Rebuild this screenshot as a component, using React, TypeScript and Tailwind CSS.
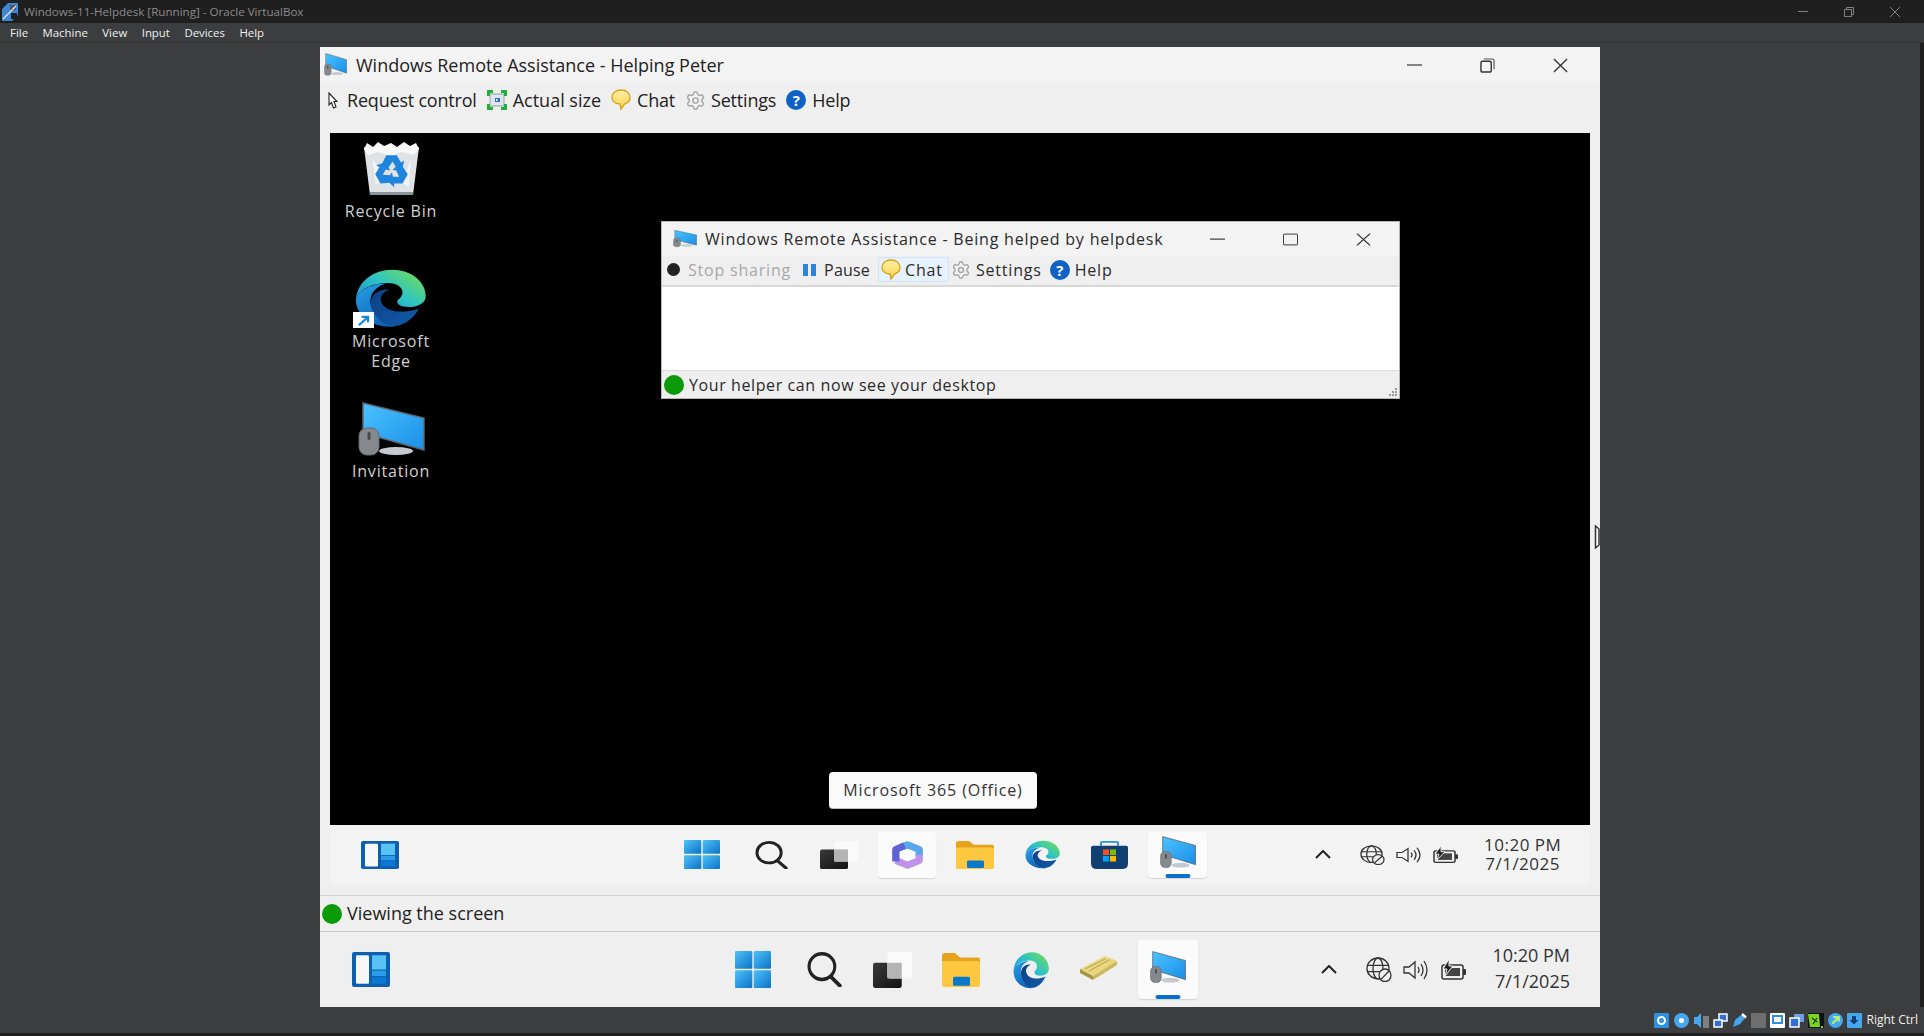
import { Settings } from "lucide-react";

const uiFont = "font-['Open_Sans',sans-serif]";

// gradients shared by all the icons below
function Defs() {
  return (
    <svg className="absolute w-0 h-0" aria-hidden="true">
      <defs>
        <linearGradient id="screen" x1="0" y1="0" x2="1" y2="1">
          <stop offset="0" stopColor="#4cc2ff" />
          <stop offset="1" stopColor="#1a8fe8" />
        </linearGradient>
        <linearGradient id="start" x1="0" y1="0" x2="1" y2="1">
          <stop offset="0" stopColor="#4fc3f7" />
          <stop offset="1" stopColor="#0a72c9" />
        </linearGradient>
        <linearGradient id="edgeTop" x1="0" y1="1" x2="1" y2="0.2">
          <stop offset="0" stopColor="#1a86d8" />
          <stop offset="0.55" stopColor="#2ec4c4" />
          <stop offset="1" stopColor="#6fdc5a" />
        </linearGradient>
        <linearGradient id="edgeLeft" x1="0" y1="0" x2="0.6" y2="1">
          <stop offset="0" stopColor="#2a9fe6" />
          <stop offset="1" stopColor="#0c64b8" />
        </linearGradient>
        <linearGradient id="edgeDark" x1="0" y1="0" x2="1" y2="1">
          <stop offset="0" stopColor="#0d3f86" />
          <stop offset="1" stopColor="#115ba8" />
        </linearGradient>
        <linearGradient id="chat" x1="0" y1="0" x2="0" y2="1">
          <stop offset="0" stopColor="#fff0a8" />
          <stop offset="1" stopColor="#ffd24d" />
        </linearGradient>
        <linearGradient id="taskBack" x1="0" y1="0" x2="1" y2="1">
          <stop offset="0" stopColor="#3a3a3a" />
          <stop offset="1" stopColor="#111" />
        </linearGradient>
      </defs>
    </svg>
  );
}

function MonitorIcon({ className = "" }: { className?: string }) {
  return (
    <svg viewBox="0 0 67 57" preserveAspectRatio="none" className={className}>
      <path d="M5 1 L66 16 V48 L5 31Z" fill="url(#screen)" stroke="#5d6670" strokeWidth="1.4" />
      <ellipse cx="38" cy="49" rx="17" ry="4" fill="#c4cad0" />
      <rect x="1" y="26" width="20" height="27" rx="8" fill="#85888c" stroke="#66696d" />
      <rect x="9.5" y="30" width="3" height="8" rx="1.5" fill="#44474a" />
    </svg>
  );
}

function RecycleBin({ className = "" }: { className?: string }) {
  const arrow = "M-5 -15 L5 -15 L9 -8 L12 -10 L10 0 L1 -1 L4 -4 L1 -9 L-3 -3 L-9 -7Z";
  return (
    <svg viewBox="0 0 55 53" className={className}>
      <path d="M0 5 L55 5 L49 53 H6Z" fill="#dfe3e6" />
      <path d="M0 7 L3 1 L9 5 L14 0 L20 4 L27 1 L33 5 L40 0 L46 4 L52 1 L55 7 L50 13 L38 10 L27 14 L14 10 L4 13Z" fill="#f7f8f9" />
      <path d="M6 50 H49 L49 53 H6Z" fill="#8d9399" />
      <path d="M8 16 L20 34 L12 44Z M47 18 L37 40 L45 45Z" fill="#f1f3f5" />
      <g fill="#1f84dc" transform="translate(27.5 29) scale(1.05)">
        <path d={arrow} />
        <path d={arrow} transform="rotate(120)" />
        <path d={arrow} transform="rotate(240)" />
      </g>
    </svg>
  );
}

function EdgeIcon({ className = "", shortcut = false }: { className?: string; shortcut?: boolean }) {
  return (
    <div className={`relative ${className}`}>
      <svg viewBox="0 0 100 100" preserveAspectRatio="none" className="w-full h-full">
        <path d="M4 52 C6 22 28 3 52 3 C78 3 97 23 97 47 C97 59 86 65 74 65 C65 65 59 62 59 56 C59 52 66 50 66 41 C66 30 56 25 46 25 C26 25 8 36 4 52Z" fill="url(#edgeTop)" />
        <path d="M4 52 C8 36 26 26 44 26 C30 31 20 45 24 63 C28 81 42 95 58 97 C28 102 3 80 4 52Z" fill="url(#edgeLeft)" />
        <path d="M24 63 C21 46 34 34 49 36 C38 41 34 51 39 60 C46 74 68 76 88 68 C80 86 66 97 54 97 C38 95 27 80 24 63Z" fill="url(#edgeDark)" />
      </svg>
      {shortcut && (
        <div className="absolute left-0 bottom-0 w-[21px] h-[16px] bg-white flex items-center justify-center">
          <svg viewBox="0 0 16 12" className="w-[15px] h-[11px]">
            <path d="M3 11 L12 3 M6 2 H13 V8" fill="none" stroke="#1685dc" strokeWidth="2.4" />
          </svg>
        </div>
      )}
    </div>
  );
}

function WidgetsIcon({ className = "" }: { className?: string }) {
  return (
    <svg viewBox="0 0 38 32" preserveAspectRatio="none" className={className}>
      <rect width="38" height="32" rx="2" fill="#0f5fb0" />
      <rect x="4" y="3" width="13" height="26" rx="1" fill="#f7f7f7" />
      <rect x="20" y="3" width="14" height="13" fill="#57c3f5" />
      <rect x="20" y="17" width="14" height="5" fill="#2b9de8" />
      <rect x="20" y="23" width="14" height="6" fill="#0b78d4" />
    </svg>
  );
}

function StartIcon({ className = "" }: { className?: string }) {
  return (
    <svg viewBox="0 0 36 30" preserveAspectRatio="none" className={className}>
      <rect width="17.3" height="14.3" rx="1" fill="url(#start)" />
      <rect x="18.7" width="17.3" height="14.3" rx="1" fill="url(#start)" />
      <rect y="15.7" width="17.3" height="14.3" rx="1" fill="url(#start)" />
      <rect x="18.7" y="15.7" width="17.3" height="14.3" rx="1" fill="url(#start)" />
    </svg>
  );
}

function SearchIcon({ className = "" }: { className?: string }) {
  return (
    <svg viewBox="0 0 34 30" preserveAspectRatio="none" className={className}>
      <ellipse cx="14.5" cy="12.5" rx="12.5" ry="11" fill="none" stroke="#222" strokeWidth="3" />
      <path d="M23 21 L32 29" stroke="#222" strokeWidth="3.4" strokeLinecap="round" />
    </svg>
  );
}

function TaskViewIcon({ className = "" }: { className?: string }) {
  return (
    <svg viewBox="0 0 38 30" preserveAspectRatio="none" className={className}>
      <rect x="0" y="9" width="28" height="21" rx="2" fill="url(#taskBack)" />
      <rect x="14" y="0" width="24" height="22" rx="2" fill="#fafafa" />
      <rect x="14" y="9" width="14" height="13" fill="#b4b4b4" />
    </svg>
  );
}

function FolderIcon({ className = "" }: { className?: string }) {
  return (
    <svg viewBox="0 0 38 30" preserveAspectRatio="none" className={className}>
      <path d="M0 3 Q0 0 3 0 H13 L18 4 H36 Q38 4 38 6 V10 H0Z" fill="#e6a21c" />
      <path d="M0 7 H35 Q38 7 38 10 V28 Q38 30 36 30 H2 Q0 30 0 28Z" fill="#fdc83f" />
      <rect x="11" y="21" width="17" height="8" rx="1.5" fill="#0b78c9" />
    </svg>
  );
}

function StoreIcon({ className = "" }: { className?: string }) {
  return (
    <svg viewBox="0 0 37 30" preserveAspectRatio="none" className={className}>
      <path d="M10 5 V2 Q10 1 12 1 H25 Q27 1 27 2 V5" fill="none" stroke="#2c93dd" strokeWidth="2" />
      <path d="M0 7 Q0 5 2 5 H35 Q37 5 37 7 V24 Q37 30 31 30 H6 Q0 30 0 24Z" fill="#123f73" />
      <rect x="12" y="9" width="6" height="6" fill="#f25022" />
      <rect x="19" y="9" width="6" height="6" fill="#7fba00" />
      <rect x="12" y="16" width="6" height="6" fill="#00a4ef" />
      <rect x="19" y="16" width="6" height="6" fill="#ffb900" />
    </svg>
  );
}

function M365Icon({ className = "" }: { className?: string }) {
  return (
    <svg viewBox="0 0 36 30" preserveAspectRatio="none" className={className} fill="none" strokeWidth="7.5" strokeLinejoin="round">
      <path d="M30 16 V9 L18 4 L12 6.500" stroke="#5aa6ea" />
      <path d="M30 15 V21 L18 26 L6 21" stroke="#c192ea" />
      <path d="M6 22 V9 L15 5" stroke="#5e62d2" />
    </svg>
  );
}

function BookIcon({ className = "" }: { className?: string }) {
  return (
    <svg viewBox="0 0 39 25" preserveAspectRatio="none" className={className}>
      <path d="M1 14 L26 1 L38 6 L14 21Z" fill="#e8d77e" />
      <path d="M1 14 L14 21 V25 L1 18Z" fill="#a89445" />
      <path d="M14 21 L38 6 V10 L14 25Z" fill="#cdb75a" />
      <path d="M6 14 L26 4 M10 16 L30 5" stroke="#b59f4a" strokeWidth="1" />
    </svg>
  );
}

function GlobeIcon({ className = "" }: { className?: string }) {
  return (
    <svg viewBox="0 0 26 24" preserveAspectRatio="none" className={className} fill="none" stroke="#333" strokeWidth="1.3">
      <ellipse cx="12" cy="11" rx="11" ry="10" />
      <ellipse cx="12" cy="11" rx="5" ry="10" />
      <path d="M1 8 H23 M1 14 H23" />
      <circle cx="19" cy="17.5" r="6" fill="#f0f0f0" />
      <path d="M15 21.5 L23 13.5" />
    </svg>
  );
}

function SpeakerIcon({ className = "" }: { className?: string }) {
  return (
    <svg viewBox="0 0 26 20" preserveAspectRatio="none" className={className} fill="none" stroke="#333" strokeWidth="1.3">
      <path d="M1 7 H6 L12 2 V18 L6 13 H1Z" />
      <path d="M15 7 Q17 10 15 13 M18 4 Q22 10 18 16 M21 1 Q27 10 21 19" />
    </svg>
  );
}

function BatteryIcon({ className = "" }: { className?: string }) {
  return (
    <svg viewBox="0 0 26 22" preserveAspectRatio="none" className={className}>
      <rect x="1" y="6" width="21" height="14" rx="2" fill="#f0f0f0" stroke="#333" strokeWidth="1.5" />
      <rect x="4" y="9" width="15" height="8" fill="#444" />
      <rect x="22" y="10" width="3" height="6" rx="1" fill="#333" />
      <path d="M8 0 L2 10 H6 L4 17 L12 7 H8Z" fill="#222" stroke="#f0f0f0" strokeWidth="1" />
    </svg>
  );
}

function Chevron() {
  return (
    <svg viewBox="0 0 16 9" className="w-[16px] h-[9px]">
      <path d="M1 8 L8 1 L15 8" fill="none" stroke="#222" strokeWidth="2" />
    </svg>
  );
}

function ChatIcon() {
  return (
    <svg viewBox="0 0 20 22" className="w-[20px] h-[22px] shrink-0">
      <path d="M10 1 C15 1 19 4 19 8.500 C19 12 16.500 14 13.500 15 L10 20 L9 15 C4.500 14.500 1 12.500 1 8.500 C1 4 5 1 10 1Z" fill="url(#chat)" stroke="#d9a520" strokeWidth="1.400" />
    </svg>
  );
}

function HelpIcon() {
  return (
    <div className="w-[20px] h-[20px] shrink-0 rounded-full bg-[#0f62c4] text-white text-[15px] leading-[20px] font-bold text-center tracking-normal">?</div>
  );
}

function ActualSizeIcon() {
  return (
    <svg viewBox="0 0 20 20" className="w-[20px] h-[20px] shrink-0">
      <rect x="3" y="4" width="14" height="12" fill="#dfe5ea" stroke="#93a3ad" />
      <path d="M1.500 6 V1.500 H6 M14 1.500 H18.500 V6 M18.500 14 V18.500 H14 M6 18.500 H1.500 V14" fill="none" stroke="#22b03a" strokeWidth="3" />
      <rect x="8" y="8" width="5" height="4" fill="#2a6fc4" />
      <rect x="9" y="9" width="1.500" height="2" fill="#fff" />
    </svg>
  );
}

function Gear({ className = "" }: { className?: string }) {
  return <Settings className={`fill-[#f2f2f2] text-[#a6a6a6] shrink-0 ${className}`} strokeWidth={1.7} />;
}

function DesktopItem({ icon, label, className = "" }: { icon: React.ReactNode; label: React.ReactNode; className?: string }) {
  return (
    <div className={`flex flex-col items-center text-[#d0d0d0] text-[16px] leading-[20px] tracking-[0.8px] text-center ${className}`}>
      {icon}
      {label}
    </div>
  );
}

function WindowControls({ max, className = "" }: { max: React.ReactNode; className?: string }) {
  return (
    <div className={`flex items-center ${className}`}>
      <svg viewBox="0 0 15 15" className="w-[15px] h-[15px]">
        <path d="M0 7 H15" stroke="#444" strokeWidth="1.300" />
      </svg>
      <div className="ml-[58px]">{max}</div>
      <svg viewBox="0 0 16 16" className="ml-[58px] w-[15px] h-[15px]">
        <path d="M1 1 L15 15 M15 1 L1 15" stroke="#333" strokeWidth="1.400" />
      </svg>
    </div>
  );
}

function RunningBox({ className = "" }: { className?: string }) {
  return (
    <div className={`relative flex items-center justify-center bg-[#fbfbfb] rounded-[4px] shadow-[0_1px_1px_rgba(0,0,0,0.12)] ${className}`}>
      <MonitorIcon className="w-[36px] h-[34px] mb-[4px]" />
      <div className="absolute bottom-[0px] left-1/2 -translate-x-1/2 w-[25px] h-[4px] rounded-full bg-[#0b6fc9]" />
    </div>
  );
}

function InnerWindow() {
  return (
    <div className="absolute left-[331px] top-[88px] w-[739px] h-[178px] flex flex-col bg-white border border-[#b5b5b5] text-[16px] tracking-[0.8px] text-[#2a2a2a]">
      <div className="h-[34px] shrink-0 bg-[#f3f3f3] flex items-center pl-[11px]">
        <MonitorIcon className="w-[24px] h-[18px]" />
        <span className="ml-[8px] w-[505px] whitespace-nowrap">Windows Remote Assistance - Being helped by helpdesk</span>
        <WindowControls
          className="scale-y-90"
          max={<div className="w-[15px] h-[13px] border-[1.5px] border-[#333] rounded-[1px]" />}
        />
      </div>
      <div className="h-[31px] shrink-0 bg-[#efefef] border-b-[2px] border-[#d8d8d8] flex items-center pl-[5px] pb-[2px]">
        <div className="w-[13px] h-[13px] rounded-full bg-[#222]" />
        <span className="ml-[8px] text-[#a8a8a8]">Stop sharing</span>
        <div className="ml-[12px] flex gap-[3px]">
          <div className="w-[5px] h-[12px] bg-[#2a86dc]" />
          <div className="w-[5px] h-[12px] bg-[#2a86dc]" />
        </div>
        <span className="ml-[8px] tracking-[0.2px]">Pause</span>
        <div className="ml-[8px] h-[25px] w-[71px] flex items-center gap-[4px] pl-[2px] bg-[#e5f1fb] border border-[#cfe4f7] rounded-[2px]">
          <ChatIcon />
          <span>Chat</span>
        </div>
        <Gear className="ml-[2px] w-[20px] h-[20px]" />
        <span className="ml-[5px]">Settings</span>
        <div className="ml-[8px]"><HelpIcon /></div>
        <span className="ml-[5px]">Help</span>
      </div>
      <div className="flex-1" />
      <div className="relative h-[28px] shrink-0 bg-[#efefef] border-t border-[#dcdcdc] flex items-center pl-[2px] tracking-[0.6px]">
        <div className="w-[20px] h-[20px] rounded-full bg-[#0a9a0a]" />
        <span className="ml-[5px]">Your helper can now see your desktop</span>
        {/* resize grip */}
        <div className="absolute right-[2px] bottom-[2px] grid grid-cols-3 gap-[1px]">
          {[0, 0, 1, 0, 1, 1, 1, 1, 1].map((on, i) => (
            <div key={i} className={`w-[2px] h-[2px] ${on ? "bg-[#9a9a9a]" : ""}`} />
          ))}
        </div>
      </div>
    </div>
  );
}

function StatusIcons() {
  return (
    <div className="flex items-center gap-[4px]">
      <div className="w-[15px] h-[15px] bg-[#2f8fe0] rounded-[1px] flex items-center justify-center">
        <div className="w-[9px] h-[9px] rounded-full border-2 border-white" />
      </div>
      <div className="ml-[1px] w-[15px] h-[15px] rounded-full bg-[#45a8ee] flex items-center justify-center">
        <div className="w-[5px] h-[5px] rounded-full bg-white" />
      </div>
      <svg viewBox="0 0 15 15" className="ml-[1px] w-[15px] h-[15px]">
        <path d="M0 4 H3 L7 0 V15 L3 11 H0Z" fill="#45a8ee" />
        <rect x="9" y="3" width="6" height="12" fill="#7f7f7f" />
      </svg>
      <svg viewBox="0 0 15 15" className="w-[15px] h-[15px]">
        <rect x="6" y="1" width="8" height="7" fill="#2f6fd0" stroke="#fff" strokeWidth="1.500" />
        <rect x="1" y="7" width="8" height="7" fill="#2f6fd0" stroke="#fff" strokeWidth="1.500" />
      </svg>
      <svg viewBox="0 0 15 15" className="w-[15px] h-[15px]">
        <path d="M1 14 L3 7 L9 2 L13 5 L8 11Z" fill="#45a8ee" />
        <path d="M10 1 L14 4.500" stroke="#fff" strokeWidth="2.500" />
      </svg>
      <div className="w-[15px] h-[15px] bg-[#6e6e6e]" />
      <div className="w-[15px] h-[15px] bg-white p-[2px] rounded-[1px]">
        <div className="w-full h-[9px] bg-[#2f8fe0] p-[2px]"><div className="w-full h-full bg-white" /></div>
      </div>
      <svg viewBox="0 0 15 15" className="w-[15px] h-[15px]">
        <rect x="5" y="1" width="10" height="8" fill="#6f9fe6" />
        <rect x="1" y="5" width="9" height="9" fill="#2f6fd0" stroke="#fff" strokeWidth="1.500" />
      </svg>
      <svg viewBox="0 0 16 15" className="w-[16px] h-[15px]">
        <rect width="16" height="15" fill="#111" />
        <path d="M0 1 L11 1 L12 14 L2 14Z" fill="#7ed321" />
        <path d="M4 5 L9 9 M9 5 L5 11" stroke="#1a3a00" strokeWidth="1.200" />
        <rect x="13" y="13" width="2" height="2" fill="#7ed321" />
      </svg>
      <div className="w-[15px] h-[15px] rounded-full bg-[#45a8ee] flex items-center justify-center">
        <svg viewBox="0 0 10 10" className="w-[11px] h-[11px]">
          <path d="M2 8 L8 2 M3 2 H8 V6" fill="none" stroke="#b6ee7a" strokeWidth="2" />
        </svg>
      </div>
      <div className="w-[15px] h-[15px] bg-[#45a8ee] rounded-[1px] flex items-center justify-center">
        <svg viewBox="0 0 10 10" className="w-[10px] h-[10px]">
          <path d="M3 1 H7 V5 H9.500 L5 9.500 L0.500 5 H3Z" fill="#123f73" />
        </svg>
      </div>
    </div>
  );
}

export default function App() {
  return (
    <div className={`w-screen h-screen overflow-hidden flex flex-col bg-[#3c3d3f] ${uiFont}`}>
      <Defs />
      {/* host window title */}
      <div className="h-[23px] shrink-0 bg-[#1f1f1f] flex items-center text-[11.600px] text-[#8b8b8b]">
        <svg viewBox="0 0 16 18" className="ml-[2px] w-[16px] h-[18px]">
          <path d="M0 6 L6 0 H16 V12 L10 18 H0Z" fill="#3f86d4" />
          <rect x="8" y="2" width="6" height="5" fill="#555" />
          <rect x="9" y="10" width="6" height="6" fill="#1f1f1f" />
          <path d="M1 16 L14 3" stroke="#dfe8f0" strokeWidth="1.200" />
        </svg>
        <span className="ml-[6px]">Windows-11-Helpdesk [Running] - Oracle VirtualBox</span>
        <div className="ml-auto mr-[24px] flex items-center gap-[36px]">
          <div className="w-[10px] h-[1px] bg-[#808080]" />
          <svg viewBox="0 0 10 10" className="w-[10px] h-[10px]">
            <path d="M0.500 2.500 H7.500 V9.500 H0.500Z M2.500 2.500 V0.500 H9.500 V7.500 H7.500" fill="none" stroke="#808080" />
          </svg>
          <svg viewBox="0 0 10 10" className="w-[10px] h-[10px]">
            <path d="M0 0 L10 10 M10 0 L0 10" stroke="#808080" />
          </svg>
        </div>
      </div>

      {/* host menu */}
      <div className="h-[20px] shrink-0 border-b border-[#333436] flex items-center gap-[14.500px] pl-[10px] text-[11.400px] text-[#f0f0f0]">
        <span>File</span>
        <span>Machine</span>
        <span>View</span>
        <span>Input</span>
        <span>Devices</span>
        <span>Help</span>
      </div>

      {/* guest area */}
      <div className="relative flex-1 min-h-0 border-r-[4px] border-[#1f1f1f] pt-[4px] pl-[320px]">
        <div className="w-[1280px] h-[960px] flex flex-col bg-[#efefef] text-[#222]">
          <div className="h-[36px] shrink-0 bg-[#f3f3f3] flex items-center pl-[4px] text-[18px]">
            <MonitorIcon className="w-[23px] h-[24px]" />
            <span className="ml-[9px] w-[1023px] whitespace-nowrap">Windows Remote Assistance - Helping Peter</span>
            <div className="ml-[28px]">
              <WindowControls
                max={
                  <svg viewBox="0 0 16 16" className="w-[15px] h-[15px]">
                    <rect x="1" y="3.500" width="11" height="11.500" rx="2" fill="none" stroke="#333" strokeWidth="1.500" />
                    <path d="M4 1 H13 Q15 1 15 3 V12" fill="none" stroke="#555" strokeWidth="1.200" />
                  </svg>
                }
              />
            </div>
          </div>

          <div className="h-[50px] shrink-0 flex items-start pt-[5px] pl-[8px] text-[18px] tracking-[-0.2px]">
            <div className="flex items-center h-[24px]">
              <svg viewBox="0 0 10 17" className="w-[10px] h-[17px]">
                <path d="M1 1 L9 9.500 H6 L8 15 L5.500 16 L3.500 10.500 L1 13Z" fill="#fff" stroke="#222" strokeWidth="1.100" />
              </svg>
              <span className="ml-[9px]">Request control</span>
              <div className="ml-[10px]"><ActualSizeIcon /></div>
              <span className="ml-[6px] tracking-[0px]">Actual size</span>
              <div className="ml-[10px]"><ChatIcon /></div>
              <span className="ml-[6px]">Chat</span>
              <Gear className="ml-[10px] w-[21px] h-[21px]" />
              <span className="ml-[5px]">Settings</span>
              <div className="ml-[10px]"><HelpIcon /></div>
              <span className="ml-[6px]">Help</span>
            </div>
          </div>

          {/* remote desktop */}
          <div className="mx-[10px] h-[692px] shrink-0 relative bg-black overflow-hidden">
            <div className="w-[122px] flex flex-col items-center pt-[9px]">
              <DesktopItem icon={<RecycleBin className="w-[55px] h-[53px]" />} label={<span className="mt-[6px]">Recycle Bin</span>} />
              <DesktopItem
                className="mt-[47px]"
                icon={<EdgeIcon shortcut className="w-[75px] h-[60px]" />}
                label={<span className="mt-[3px]">Microsoft<br />Edge</span>}
              />
              <DesktopItem
                className="mt-[31px]"
                icon={<MonitorIcon className="w-[67px] h-[57px]" />}
                label={<span className="mt-[2px]">Invitation</span>}
              />
            </div>

            <InnerWindow />

            <div className="absolute left-[499px] top-[639px] w-[208px] h-[37px] flex items-center justify-center bg-[#fafafa] rounded-[4px] border-b border-[#bdbdbd] text-[16px] tracking-[0.9px] text-[#333]">
              Microsoft 365 (Office)
            </div>
          </div>

          {/* remote taskbar */}
          <div className="h-[59px] shrink-0 mx-[10px] bg-[#f3f3f3] flex items-center pl-[31px] text-[17px] text-[#333] tracking-[0.5px]">
            <WidgetsIcon className="w-[38px] h-[28px]" />
            <StartIcon className="ml-[285px] w-[36px] h-[29px]" />
            <SearchIcon className="ml-[35px] w-[33px] h-[28px]" />
            <TaskViewIcon className="ml-[32px] w-[38px] h-[28px]" />
            <div className="ml-[20px] w-[58px] h-[46px] flex items-center justify-center bg-[#fbfbfb] rounded-[4px] shadow-[0_1px_1px_rgba(0,0,0,0.12)]">
              <M365Icon className="w-[35px] h-[28px]" />
            </div>
            <FolderIcon className="ml-[20px] w-[38px] h-[28px]" />
            <EdgeIcon className="ml-[30px] w-[37px] h-[29px]" />
            <StoreIcon className="ml-[30px] w-[37px] h-[28px]" />
            <RunningBox className="ml-[20px] w-[59px] h-[46px]" />
            <div className="ml-[108px]"><Chevron /></div>
            <GlobeIcon className="ml-[29px] w-[25px] h-[20px]" />
            <SpeakerIcon className="ml-[11px] w-[26px] h-[16px]" />
            <BatteryIcon className="ml-[11px] w-[26px] h-[18px]" />
            <div className="ml-[25px] w-[76px] -mt-[2px] text-right leading-[19px] whitespace-nowrap">
              <div>10:20 PM</div>
              <div>7/1/2025</div>
            </div>
          </div>

          <div className="h-[12px] shrink-0 border-b border-[#d4d4d4]" />

          {/* status bar */}
          <div className="h-[36px] shrink-0 flex items-center pl-[2px] text-[18px] border-b border-[#c8c8c8]">
            <div className="w-[20px] h-[20px] rounded-full bg-[#0a9a0a]" />
            <span className="ml-[5px]">Viewing the screen</span>
          </div>

          {/* host guest taskbar */}
          <div className="flex-1 flex items-center pl-[32px] text-[18px] text-[#333]">
            <WidgetsIcon className="w-[38px] h-[35px]" />
            <StartIcon className="ml-[345px] w-[36px] h-[37px]" />
            <SearchIcon className="ml-[36px] w-[35px] h-[35px]" />
            <TaskViewIcon className="ml-[31px] w-[39px] h-[36px]" />
            <FolderIcon className="ml-[30px] w-[38px] h-[34px]" />
            <EdgeIcon className="ml-[32px] w-[38px] h-[38px]" />
            <BookIcon className="ml-[29px] w-[39px] h-[25px] -mt-[5px]" />
            <RunningBox className="ml-[20px] w-[60px] h-[59px]" />
            <div className="ml-[123px]"><Chevron /></div>
            <GlobeIcon className="ml-[29px] w-[26px] h-[25px]" />
            <SpeakerIcon className="ml-[11px] w-[26px] h-[20px]" />
            <BatteryIcon className="ml-[12px] w-[26px] h-[22px]" />
            <div className="ml-[25px] w-[78px] -mt-[3px] text-right leading-[26px] whitespace-nowrap">
              <div>10:20 PM</div>
              <div>7/1/2025</div>
            </div>
          </div>
        </div>

        {/* host resize cursor sitting on the window edge */}
        <svg viewBox="0 0 7 24" className="absolute left-[1594px] top-[482px] w-[7px] h-[24px]">
          <path d="M1.500 1 L5 4 V20 L1.500 23Z" fill="#fff" stroke="#333" strokeWidth="1.500" />
        </svg>
      </div>

      {/* host status bar */}
      <div className="h-[26px] shrink-0 flex items-center justify-end pr-[6px] text-[12px] text-[#f0f0f0] gap-[5px]">
        <StatusIcons />
        <span>Right Ctrl</span>
      </div>
      <div className="h-[3px] shrink-0 bg-[#1f1f1f]" />
    </div>
  );
}
